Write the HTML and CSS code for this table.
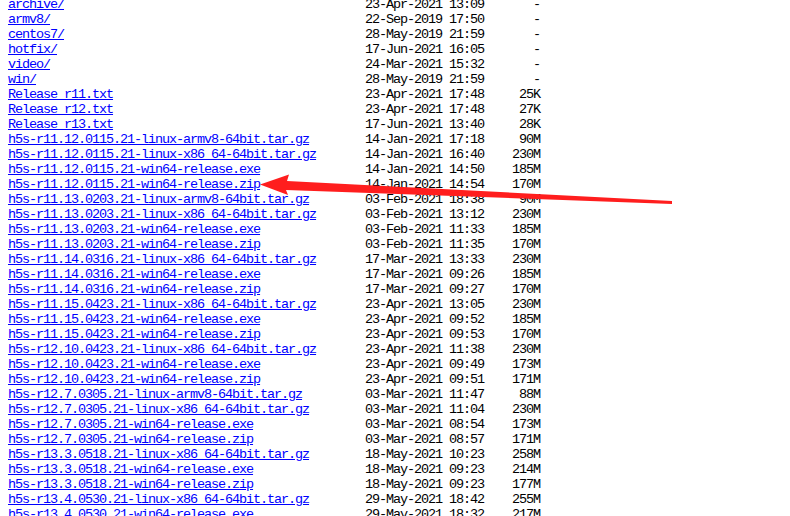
FILE: index.html
```html
<!DOCTYPE html>
<html>
<head>
<meta charset="utf-8">
<title>Index of /</title>
<link rel="stylesheet" href="styles.css">
</head>
<body>
<div class="listing">
  <div class="row"><a href="#">archive/</a><span class="date">23-Apr-2021 13:09</span><span class="size">-</span></div>
  <div class="row"><a href="#">armv8/</a><span class="date">22-Sep-2019 17:50</span><span class="size">-</span></div>
  <div class="row"><a href="#">centos7/</a><span class="date">28-May-2019 21:59</span><span class="size">-</span></div>
  <div class="row"><a href="#">hotfix/</a><span class="date">17-Jun-2021 16:05</span><span class="size">-</span></div>
  <div class="row"><a href="#">video/</a><span class="date">24-Mar-2021 15:32</span><span class="size">-</span></div>
  <div class="row"><a href="#">win/</a><span class="date">28-May-2019 21:59</span><span class="size">-</span></div>
  <div class="row"><a href="#">Release_r11.txt</a><span class="date">23-Apr-2021 17:48</span><span class="size">25K</span></div>
  <div class="row"><a href="#">Release_r12.txt</a><span class="date">23-Apr-2021 17:48</span><span class="size">27K</span></div>
  <div class="row"><a href="#">Release_r13.txt</a><span class="date">17-Jun-2021 13:40</span><span class="size">28K</span></div>
  <div class="row"><a href="#">h5s-r11.12.0115.21-linux-armv8-64bit.tar.gz</a><span class="date">14-Jan-2021 17:18</span><span class="size">90M</span></div>
  <div class="row"><a href="#">h5s-r11.12.0115.21-linux-x86_64-64bit.tar.gz</a><span class="date">14-Jan-2021 16:40</span><span class="size">230M</span></div>
  <div class="row"><a href="#">h5s-r11.12.0115.21-win64-release.exe</a><span class="date">14-Jan-2021 14:50</span><span class="size">185M</span></div>
  <div class="row"><a href="#">h5s-r11.12.0115.21-win64-release.zip</a><span class="date">14-Jan-2021 14:54</span><span class="size">170M</span></div>
  <div class="row"><a href="#">h5s-r11.13.0203.21-linux-armv8-64bit.tar.gz</a><span class="date">03-Feb-2021 18:38</span><span class="size">90M</span></div>
  <div class="row"><a href="#">h5s-r11.13.0203.21-linux-x86_64-64bit.tar.gz</a><span class="date">03-Feb-2021 13:12</span><span class="size">230M</span></div>
  <div class="row"><a href="#">h5s-r11.13.0203.21-win64-release.exe</a><span class="date">03-Feb-2021 11:33</span><span class="size">185M</span></div>
  <div class="row"><a href="#">h5s-r11.13.0203.21-win64-release.zip</a><span class="date">03-Feb-2021 11:35</span><span class="size">170M</span></div>
  <div class="row"><a href="#">h5s-r11.14.0316.21-linux-x86_64-64bit.tar.gz</a><span class="date">17-Mar-2021 13:33</span><span class="size">230M</span></div>
  <div class="row"><a href="#">h5s-r11.14.0316.21-win64-release.exe</a><span class="date">17-Mar-2021 09:26</span><span class="size">185M</span></div>
  <div class="row"><a href="#">h5s-r11.14.0316.21-win64-release.zip</a><span class="date">17-Mar-2021 09:27</span><span class="size">170M</span></div>
  <div class="row"><a href="#">h5s-r11.15.0423.21-linux-x86_64-64bit.tar.gz</a><span class="date">23-Apr-2021 13:05</span><span class="size">230M</span></div>
  <div class="row"><a href="#">h5s-r11.15.0423.21-win64-release.exe</a><span class="date">23-Apr-2021 09:52</span><span class="size">185M</span></div>
  <div class="row"><a href="#">h5s-r11.15.0423.21-win64-release.zip</a><span class="date">23-Apr-2021 09:53</span><span class="size">170M</span></div>
  <div class="row"><a href="#">h5s-r12.10.0423.21-linux-x86_64-64bit.tar.gz</a><span class="date">23-Apr-2021 11:38</span><span class="size">230M</span></div>
  <div class="row"><a href="#">h5s-r12.10.0423.21-win64-release.exe</a><span class="date">23-Apr-2021 09:49</span><span class="size">173M</span></div>
  <div class="row"><a href="#">h5s-r12.10.0423.21-win64-release.zip</a><span class="date">23-Apr-2021 09:51</span><span class="size">171M</span></div>
  <div class="row"><a href="#">h5s-r12.7.0305.21-linux-armv8-64bit.tar.gz</a><span class="date">03-Mar-2021 11:47</span><span class="size">88M</span></div>
  <div class="row"><a href="#">h5s-r12.7.0305.21-linux-x86_64-64bit.tar.gz</a><span class="date">03-Mar-2021 11:04</span><span class="size">230M</span></div>
  <div class="row"><a href="#">h5s-r12.7.0305.21-win64-release.exe</a><span class="date">03-Mar-2021 08:54</span><span class="size">173M</span></div>
  <div class="row"><a href="#">h5s-r12.7.0305.21-win64-release.zip</a><span class="date">03-Mar-2021 08:57</span><span class="size">171M</span></div>
  <div class="row"><a href="#">h5s-r13.3.0518.21-linux-x86_64-64bit.tar.gz</a><span class="date">18-May-2021 10:23</span><span class="size">258M</span></div>
  <div class="row"><a href="#">h5s-r13.3.0518.21-win64-release.exe</a><span class="date">18-May-2021 09:23</span><span class="size">214M</span></div>
  <div class="row"><a href="#">h5s-r13.3.0518.21-win64-release.zip</a><span class="date">18-May-2021 09:23</span><span class="size">177M</span></div>
  <div class="row"><a href="#">h5s-r13.4.0530.21-linux-x86_64-64bit.tar.gz</a><span class="date">29-May-2021 18:42</span><span class="size">255M</span></div>
  <div class="row"><a href="#">h5s-r13.4.0530.21-win64-release.exe</a><span class="date">29-May-2021 18:32</span><span class="size">217M</span></div>
</div>
<svg class="arrow" width="790" height="516" viewBox="0 0 790 516">
  <polygon points="260,184.5 289,174.5 287,181 672,201 672,204 286,190 288,195" fill="#ff1e1e"/>
</svg>
</body>
</html>
```
FILE: styles.css
```css
html, body {
  margin: 0;
  padding: 0;
  background: #ffffff;
  overflow: hidden;
}
body {
  width: 790px;
  height: 516px;
  position: relative;
}
.listing {
  margin: -3px 0 0 8px;
  font-family: "Liberation Mono", monospace;
  font-size: 13.5px;
  letter-spacing: -1.1px;
  line-height: 15px;
  color: #000000;
}
.row {
  display: grid;
  grid-template-columns: 357px 119px 56px;
  height: 15px;
  white-space: pre;
}
.row a {
  color: #0000ff;
  text-decoration: underline;
}
.date {
  grid-column: 2;
}
.size {
  grid-column: 3;
  text-align: right;
}
.arrow {
  position: absolute;
  left: 0;
  top: 0;
  pointer-events: none;
}
```
